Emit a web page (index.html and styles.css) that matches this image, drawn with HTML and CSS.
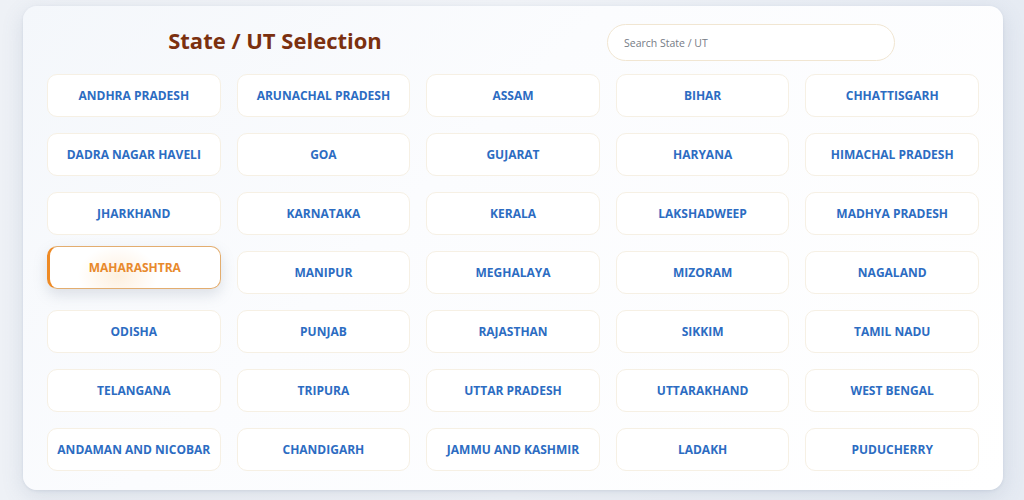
FILE: index.html
```html
<!DOCTYPE html>
<html lang="en">
<head>
<meta charset="utf-8">
<title>State / UT Selection</title>
<link rel="stylesheet" href="styles.css">
</head>
<body>
<main class="card">
  <header class="head">
    <div class="head-left"><h1 class="title">State / UT Selection</h1></div>
    <div class="head-right"><input class="search" type="text" placeholder="Search State / UT"></div>
  </header>
  <section class="grid">
    <button class="state">ANDHRA PRADESH</button>
    <button class="state">ARUNACHAL PRADESH</button>
    <button class="state">ASSAM</button>
    <button class="state">BIHAR</button>
    <button class="state">CHHATTISGARH</button>
    <button class="state">DADRA NAGAR HAVELI</button>
    <button class="state">GOA</button>
    <button class="state">GUJARAT</button>
    <button class="state">HARYANA</button>
    <button class="state">HIMACHAL PRADESH</button>
    <button class="state">JHARKHAND</button>
    <button class="state">KARNATAKA</button>
    <button class="state">KERALA</button>
    <button class="state">LAKSHADWEEP</button>
    <button class="state">MADHYA PRADESH</button>
    <button class="state active">MAHARASHTRA</button>
    <button class="state">MANIPUR</button>
    <button class="state">MEGHALAYA</button>
    <button class="state">MIZORAM</button>
    <button class="state">NAGALAND</button>
    <button class="state">ODISHA</button>
    <button class="state">PUNJAB</button>
    <button class="state">RAJASTHAN</button>
    <button class="state">SIKKIM</button>
    <button class="state">TAMIL NADU</button>
    <button class="state">TELANGANA</button>
    <button class="state">TRIPURA</button>
    <button class="state">UTTAR PRADESH</button>
    <button class="state">UTTARAKHAND</button>
    <button class="state">WEST BENGAL</button>
    <button class="state">ANDAMAN AND NICOBAR</button>
    <button class="state">CHANDIGARH</button>
    <button class="state">JAMMU AND KASHMIR</button>
    <button class="state">LADAKH</button>
    <button class="state">PUDUCHERRY</button>
  </section>
</main>
</body>
</html>
```
FILE: styles.css
```css
* { box-sizing: border-box; }
html, body { height: 100%; }
body {
  margin: 0;
  padding: 6px 21px 0 23px;
  background: linear-gradient(90deg, #eef1f6 0%, #f3f5f9 50%, #e6ebf3 100%);
  font-family: "Open Sans", "Noto Sans", sans-serif;
}
.card {
  width: 980px;
  height: 484px;
  padding: 18px 24px 19px;
  background: linear-gradient(135deg, #f4f7fb 0%, #fbfcfe 40%, #ffffff 100%);
  border-radius: 14px;
  box-shadow: 0 6px 22px rgba(90, 110, 140, 0.16), 0 1px 3px rgba(90, 110, 140, 0.12);
}
.head {
  display: flex;
  height: 37px;
  margin-bottom: 13px;
}
.head-left {
  width: 466px;
  flex: none;
  display: flex;
  justify-content: center;
  align-items: center;
  padding: 0 10px 5px 0;
}
.head-right {
  flex: 1;
  display: flex;
  justify-content: flex-start;
  padding-left: 94px;
}
.title {
  margin: 0;
  font-size: 22px;
  font-weight: 700;
  color: #7b300f;
  letter-spacing: 0;
}
.search {
  width: 288px;
  height: 37px;
  padding: 0 16px;
  border: 1.5px solid #f1e6d2;
  border-radius: 19px;
  background: #fff;
  font-family: inherit;
  font-size: 10.5px;
  color: #555;
  outline: none;
}
.search::placeholder { color: #757b85; }
.grid {
  display: grid;
  grid-template-columns: repeat(5, 1fr);
  grid-auto-rows: 43px;
  gap: 16px;
}
.state {
  display: flex;
  align-items: center;
  justify-content: center;
  padding: 0 6px;
  border: 1px solid #f6f0e4;
  border-radius: 10px;
  background: #ffffff;
  font-family: inherit;
  font-size: 12px;
  font-weight: 700;
  color: #2c6cc2;
  white-space: nowrap;
  cursor: pointer;
}
.state.active {
  transform: translateY(-5px);
  color: #e8892c;
  border: 1px solid #e3ad6f;
  border-left: 3px solid #ee8a25;
  background: radial-gradient(ellipse 40px 30px at 40% 70%, #fdf0df 0%, #fff9f2 60%, #ffffff 100%);
  box-shadow: 0 6px 14px rgba(120, 130, 150, 0.22);
}
```
